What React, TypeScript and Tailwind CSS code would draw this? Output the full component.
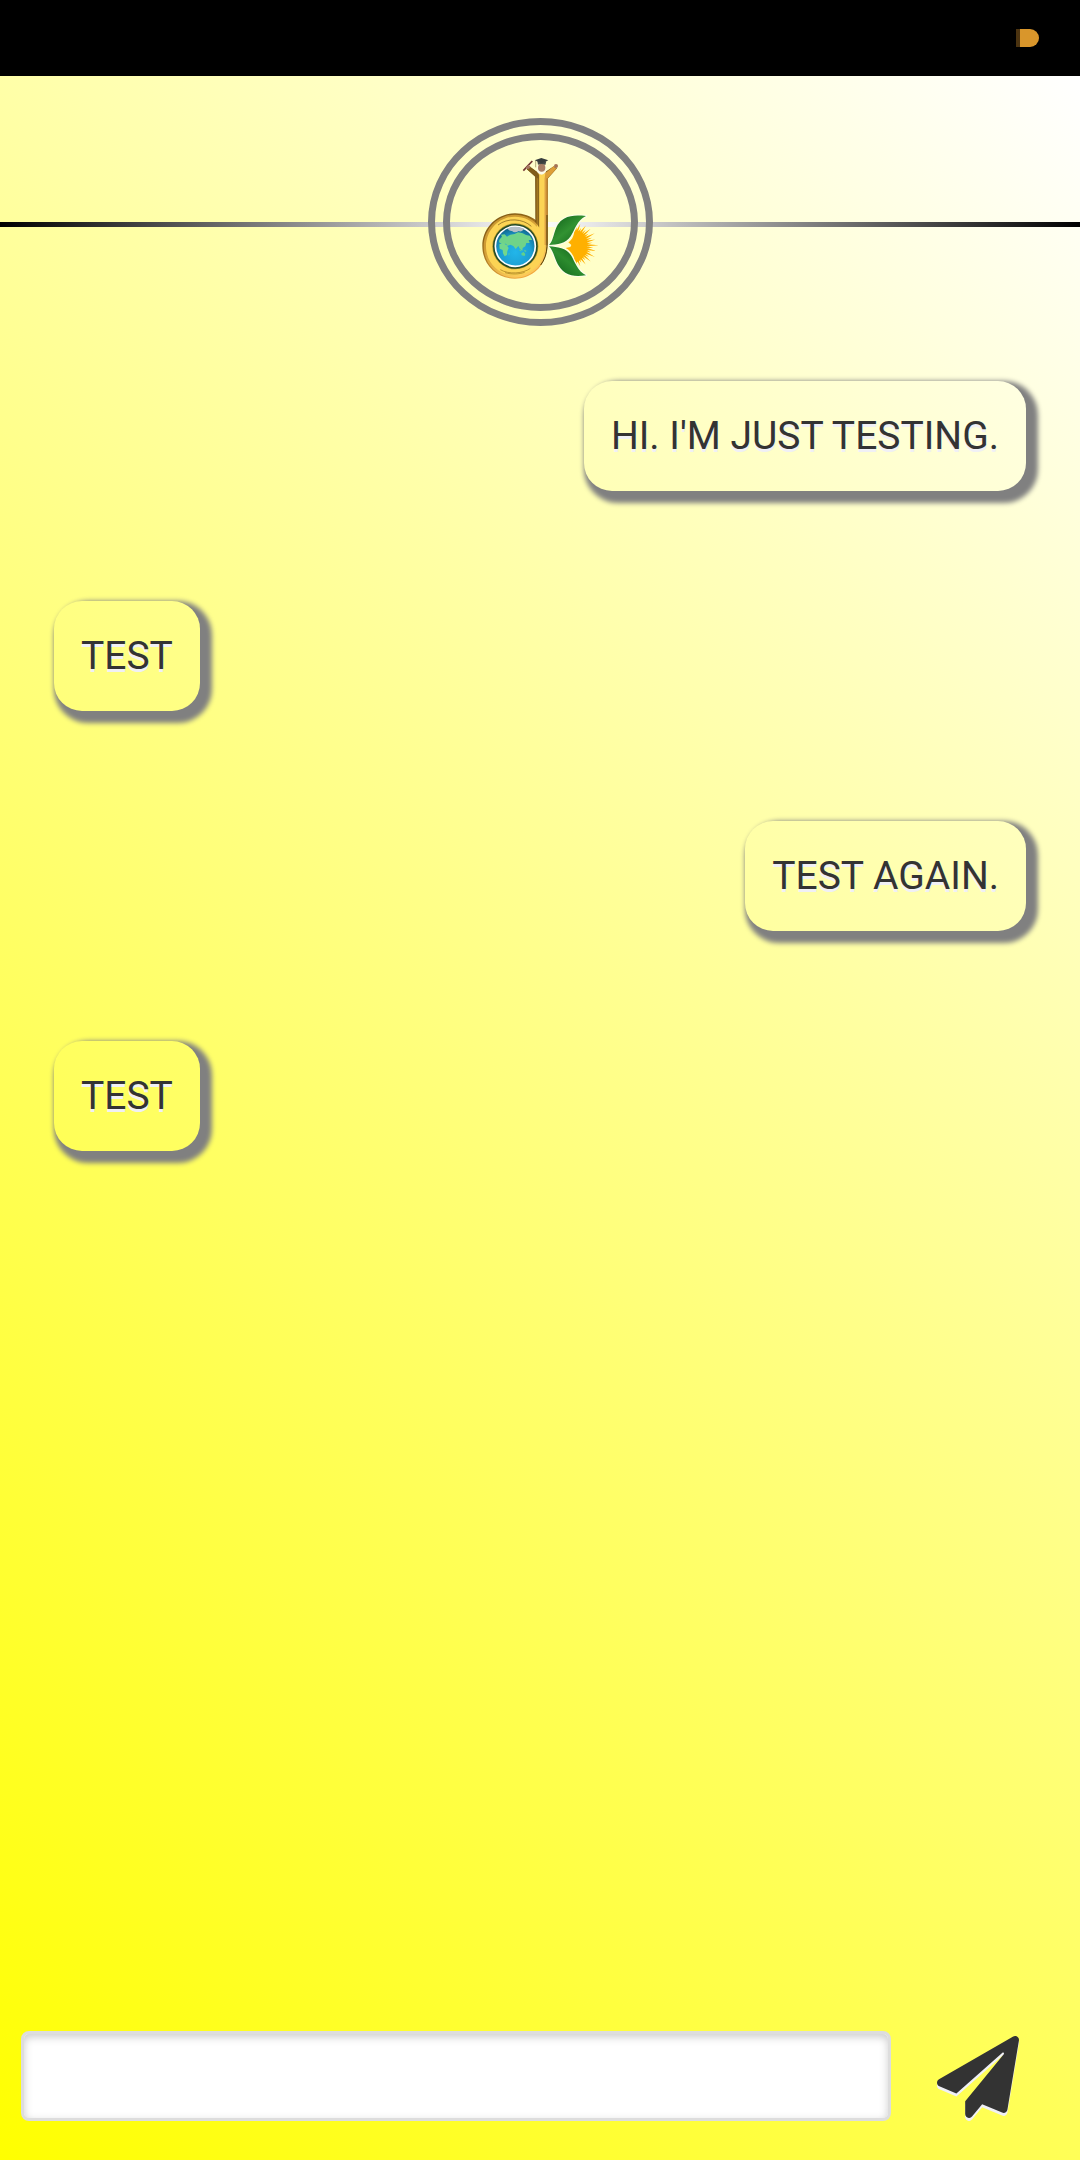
import { FaPaperPlane } from "react-icons/fa";

type Message = { id: number; text: string; mine: boolean };

const messages: Message[] = [
  { id: 1, text: "HI. I'M JUST TESTING.", mine: true },
  { id: 2, text: "TEST", mine: false },
  { id: 3, text: "TEST AGAIN.", mine: true },
  { id: 4, text: "TEST", mine: false },
];

const rayLengths = [62, 70, 60, 74, 64, 76, 62, 79, 66, 74, 64, 82, 66, 76, 63, 79, 64, 76, 62, 72, 60, 68, 62];

// Thin triangles fanning out from the right side of the sun.
const rays = rayLengths
  .map((length, i) => {
    const angle = ((-74 + i * 6.7) * Math.PI) / 180;
    const point = (r: number, a: number) =>
      `${(304 + r * Math.cos(a)).toFixed(1)} ${(301 + r * Math.sin(a)).toFixed(1)}`;
    return `M${point(40, angle - 0.1)}L${point(length, angle)}L${point(40, angle + 0.1)}Z`;
  })
  .join("");

function StatusBar() {
  return (
    <div className="flex h-[76px] shrink-0 items-center justify-end bg-black pr-[41px]">
      <div className="h-[18px] w-[23px] rounded-r-full border-l-4 border-[#4b3310] bg-[#d9962b]" />
    </div>
  );
}

function Logo() {
  return (
    <svg viewBox="0 0 420 462" className="h-[154px] w-[140px] shrink-0" role="img" aria-label="dk">
      <defs>
        <linearGradient id="stem" x1="0" x2="1" y1="0" y2="0">
          <stop offset="0" stopColor="#fcd454" />
          <stop offset=".45" stopColor="#dda143" />
          <stop offset="1" stopColor="#b4741f" />
        </linearGradient>
        <linearGradient id="stemShade" x1="0" x2="1" y1="0" y2="0">
          <stop offset="0" stopColor="#6f4c12" />
          <stop offset=".5" stopColor="#a67b22" />
          <stop offset=".75" stopColor="#7e5c17" />
          <stop offset="1" stopColor="#c79a30" />
        </linearGradient>
        <linearGradient id="rim" x1=".1" x2=".5" y1="0" y2="1">
          <stop offset="0" stopColor="#5d3f0d" />
          <stop offset=".55" stopColor="#8f6518" />
          <stop offset="1" stopColor="#f2a93f" />
        </linearGradient>
        <linearGradient id="bevel" x1=".1" x2=".5" y1="0" y2="1">
          <stop offset="0" stopColor="#c08f2c" />
          <stop offset=".6" stopColor="#cf9c34" />
          <stop offset="1" stopColor="#fbc95a" />
        </linearGradient>
        <radialGradient id="sea" cx=".5" cy=".65" r=".6">
          <stop offset="0" stopColor="#22b6ea" />
          <stop offset=".65" stopColor="#1c9fd2" />
          <stop offset="1" stopColor="#126b92" />
        </radialGradient>
        <linearGradient id="leafTop" x1="0" x2="1" y1="0" y2="1">
          <stop offset="0" stopColor="#0d5c18" />
          <stop offset=".5" stopColor="#329232" />
          <stop offset="1" stopColor="#0d5c18" />
        </linearGradient>
        <linearGradient id="leafBottom" x1="1" x2="0" y1="0" y2="1">
          <stop offset="0" stopColor="#0b5416" />
          <stop offset=".5" stopColor="#2c8c2e" />
          <stop offset="1" stopColor="#0d5c18" />
        </linearGradient>
      </defs>

      {/* sun */}
      <path d={rays} fill="#ffb000" />
      <path d="M313 252C337 260 351 280 351 302C351 323 337 345 317 353C311 329 300 316 287 309L301 306L304 300L295 292C308 283 313 270 313 252Z" fill="#ffb000" />

      {/* leaves */}
      <g stroke="#fdfde8" strokeWidth="7" strokeLinejoin="round">
        <path d="M237 300C256 282 249 239 282 221C303 210 322 211 348 213C321 226 315 254 302 274C287 296 262 300 237 300Z" />
        <path d="M237 304C257 325 254 362 286 383C304 394 323 394 348 391C323 379 315 351 303 331C288 309 263 306 237 304Z" />
      </g>
      <path d="M237 300C256 282 249 239 282 221C303 210 322 211 348 213C321 226 315 254 302 274C287 296 262 300 237 300Z" fill="url(#leafTop)" />
      <path d="M237 304C257 325 254 362 286 383C304 394 323 394 348 391C323 379 315 351 303 331C288 309 263 306 237 304Z" fill="url(#leafBottom)" />

      {/* letter d */}
      <path d="M196 95L170 72L177 63L198 78Q214 94 230 78L251 64L261 70L233 101V300C231 360 188 401 135 401C79 401 37 358 37 303C37 249 80 205 135 205C160 205 183 214 198 226Z" fill="url(#rim)" />
      <path d="M203 84Q214 92 229 82L230 103V300C228 357 186 398 135 398C80 398 41 355 41 304C41 252 83 209 135 209C162 209 186 220 200 237L206 230Z" fill="url(#bevel)" />
      <path d="M203 84Q214 92 229 82L225 103V300C224 355 184 391 135 391C84 391 48 351 48 304C48 256 87 215 135 215C163 215 186 227 200 245L206 230Z" fill="#fcd454" />
      <path d="M196 86L208 89V248L196 230Z" fill="url(#stemShade)" />
      <path d="M196 95L170 72L177 63L206 87V102Z" fill="#805d19" />
      <path d="M226 84L251 64L259 71L233 100L223 107Z" fill="#dd9f38" />
      <path d="M221 100H233V300H221Z" fill="url(#stem)" />
      <path d="M231 210V305C230 326 223 346 212 360" fill="none" stroke="#51430f" strokeWidth="3" />
      <path d="M84 240C112 218 158 220 184 244" fill="none" stroke="#765718" strokeWidth="2" />
      <path d="M91 374C116 389 160 386 181 370M105 383C126 389 147 388 164 382" fill="none" stroke="#9f771e" strokeWidth="2" />

      {/* globe */}
      <circle cx="136" cy="304" r="69" fill="#a5902f" />
      <circle cx="136" cy="304" r="67" fill="#244b26" />
      <circle cx="136" cy="304" r="60" fill="url(#sea)" stroke="#fff" strokeWidth="5" />
      <path d="M112 250Q137 240 163 251Q153 263 146 258Q134 266 126 258Q117 259 112 250Z" fill="#b4bec5" />
      <path d="M88 284L96 275L93 269L104 268L111 275L121 269L134 267L144 262L158 265L168 270L179 272L187 285L176 285L179 294L169 294L166 304L158 309L157 318L150 312L145 303L137 312L130 303L121 299L112 303L108 296L98 298L87 292Z" fill="#6fd389" />
      <path d="M88 298L98 294L110 300L116 309L112 319L111 330L104 334L99 325L98 315L89 311Z" fill="#72d78c" />
      <path d="M154 325L161 321L166 327L164 333L155 331ZM149 313L155 319L149 318ZM162 314L170 318L165 321ZM116 324L119 326L116 332Z" fill="#62d18a" />

      {/* graduate */}
      <path d="M202 62L202 82Q214 97 228 81L227 62Z" fill="#fdfbe9" />
      <ellipse cx="215" cy="68" rx="11" ry="12" fill="#a87e65" />
      <path d="M202 48L229 49L226 60Q215 54 204 59Z" fill="#454947" />
      <path d="M194 46L214 39L235 46L215 55Z" fill="#373d3d" />
      <path d="M197 47V67" stroke="#8e8454" strokeWidth="2" />
      <path d="M160 77L187 48" stroke="#713432" strokeWidth="5" />
      <path d="M167 68L175 59L182 66L175 73Z" fill="#a77862" />
      <circle cx="258" cy="63" r="6" fill="#a47456" />
    </svg>
  );
}

function Header() {
  return (
    <header className="relative mt-[42px] flex shrink-0 items-center justify-center">
      <div className="absolute inset-x-0 top-[104px] h-[5px] bg-[linear-gradient(90deg,#000000,#ffffff,#000000)]" />
      <div className="relative flex h-[208px] w-[225px] rounded-[50%] border-[7px] border-[#808080] p-2">
        <div className="flex grow items-center justify-center rounded-[50%] border-[7px] border-[#808080]">
          <Logo />
        </div>
      </div>
    </header>
  );
}

export default function App() {
  return (
    <div className="flex min-h-screen flex-col font-[Roboto,sans-serif] text-[#333333]">
      <StatusBar />
      <div className="flex grow flex-col bg-[linear-gradient(45deg,#ffff00,#ffffff)]">
        <Header />
        <main className="flex grow flex-col gap-[110px] px-[54px] pt-[55px]">
          {messages.map((message) => (
            <p
              key={message.id}
              className={`rounded-[28px] px-[27px] py-8 text-[39px] leading-[46px] shadow-[6px_6px_5px_6px_#808080] [text-shadow:0_3px_0_#f0f0f5] ${
                message.mine ? "self-end" : "self-start"
              }`}
            >
              {message.text}
            </p>
          ))}
        </main>
        <form className="flex items-center pb-[39px] pl-[21px]" onSubmit={(event) => event.preventDefault()}>
          <input
            type="text"
            aria-label="Message"
            className="h-[90px] min-w-0 grow rounded-lg border-[3px] border-[#dddddd] bg-white px-4 text-[39px] shadow-[inset_0_3px_8px_#cccccc] outline-none"
          />
          <button type="submit" aria-label="Send" className="flex w-[189px] shrink-0 items-center justify-center pt-[2px] pr-4">
            <FaPaperPlane className="size-[82px] drop-shadow-[0_3px_0_#f0f0f5]" />
          </button>
        </form>
      </div>
    </div>
  );
}
